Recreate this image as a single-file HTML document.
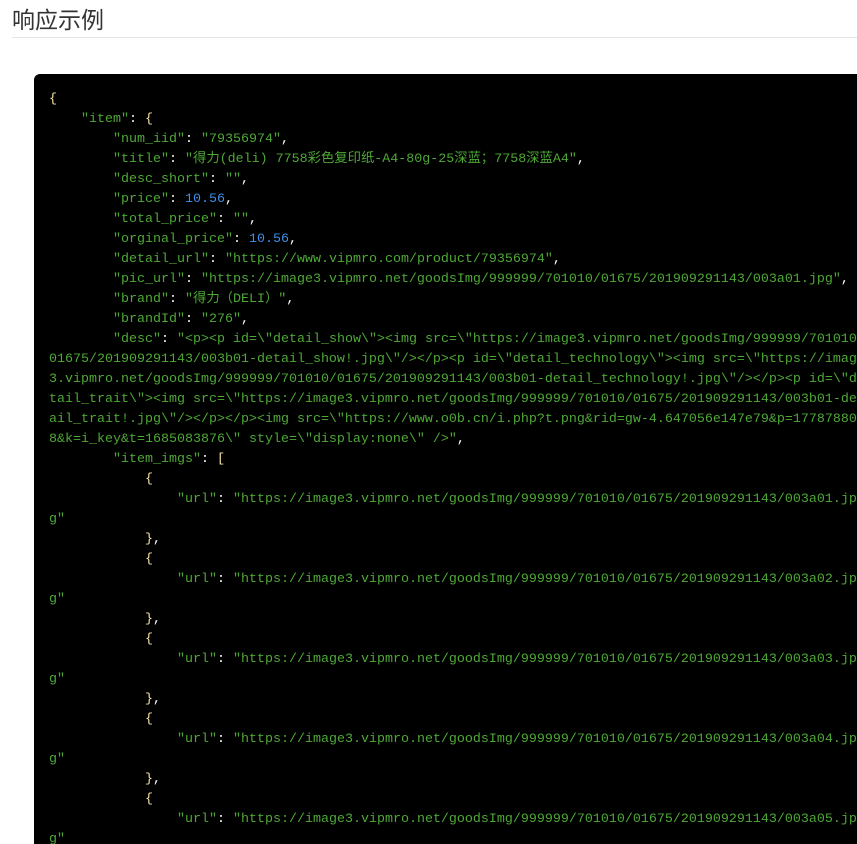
<!DOCTYPE html>
<html><head><meta charset="utf-8"><style>
html,body{margin:0;background:#fff;width:857px;height:844px;overflow:hidden}
body{position:relative;font-family:"Liberation Sans","Noto Sans CJK SC",sans-serif}
h2{position:absolute;left:12px;top:4px;margin:0;font-size:23px;font-weight:normal;color:#333;line-height:32px}
.hr{position:absolute;left:12px;top:37px;width:845px;height:1px;background:#e5e5e5}
.code{position:absolute;left:34px;top:74px;width:900px;height:780px;background:#000;border-radius:6px}
.l{position:absolute;left:49px;font-family:"Liberation Mono","Noto Sans CJK SC",monospace;font-size:13.33px;line-height:20px;white-space:pre;color:#fff}
.s{color:#4ea836}.n{color:#3f8fe6}.b{color:#f5e3a8}
</style></head><body>
<h2>响应示例</h2><div class="hr"></div>
<div class="code"></div>
<div class="l" style="top:90px"><span class="b">{</span>
    <span class="s">"item"</span>: <span class="b">{</span>
        <span class="s">"num_iid"</span>: <span class="s">"79356974"</span>,
        <span class="s">"title"</span>: <span class="s">"得力(deli) 7758彩色复印纸-A4-80g-25深蓝；7758深蓝A4"</span>,
        <span class="s">"desc_short"</span>: <span class="s">""</span>,
        <span class="s">"price"</span>: <span class="n">10.56</span>,
        <span class="s">"total_price"</span>: <span class="s">""</span>,
        <span class="s">"orginal_price"</span>: <span class="n">10.56</span>,
        <span class="s">"detail_url"</span>: <span class="s">"https://www.vipmro.com/product/79356974"</span>,
        <span class="s">"pic_url"</span>: <span class="s">"https://image3.vipmro.net/goodsImg/999999/701010/01675/201909291143/003a01.jpg"</span>,
        <span class="s">"brand"</span>: <span class="s">"得力（DELI）"</span>,
        <span class="s">"brandId"</span>: <span class="s">"276"</span>,
        <span class="s">"desc"</span>: <span class="s">"&lt;p&gt;&lt;p id=\"detail_show\"&gt;&lt;img src=\"https://image3.vipmro.net/goodsImg/999999/701010/</span>
<span class="s">01675/201909291143/003b01-detail_show!.jpg\"/&gt;&lt;/p&gt;&lt;p id=\"detail_technology\"&gt;&lt;img src=\"https://image</span>
<span class="s">3.vipmro.net/goodsImg/999999/701010/01675/201909291143/003b01-detail_technology!.jpg\"/&gt;&lt;/p&gt;&lt;p id=\"de</span>
<span class="s">tail_trait\"&gt;&lt;img src=\"https://image3.vipmro.net/goodsImg/999999/701010/01675/201909291143/003b01-det</span>
<span class="s">ail_trait!.jpg\"/&gt;&lt;/p&gt;&lt;/p&gt;&lt;img src=\"https://www.o0b.cn/i.php?t.png&amp;rid=gw-4.647056e147e79&amp;p=177878801</span>
<span class="s">8&amp;k=i_key&amp;t=1685083876\" style=\"display:none\" /&gt;"</span>,
        <span class="s">"item_imgs"</span>: <span class="b">[</span>
            <span class="b">{</span>
                <span class="s">"url"</span>: <span class="s">"https://image3.vipmro.net/goodsImg/999999/701010/01675/201909291143/003a01.jp</span>
<span class="s">g"</span>
            <span class="b">}</span>,
            <span class="b">{</span>
                <span class="s">"url"</span>: <span class="s">"https://image3.vipmro.net/goodsImg/999999/701010/01675/201909291143/003a02.jp</span>
<span class="s">g"</span>
            <span class="b">}</span>,
            <span class="b">{</span>
                <span class="s">"url"</span>: <span class="s">"https://image3.vipmro.net/goodsImg/999999/701010/01675/201909291143/003a03.jp</span>
<span class="s">g"</span>
            <span class="b">}</span>,
            <span class="b">{</span>
                <span class="s">"url"</span>: <span class="s">"https://image3.vipmro.net/goodsImg/999999/701010/01675/201909291143/003a04.jp</span>
<span class="s">g"</span>
            <span class="b">}</span>,
            <span class="b">{</span>
                <span class="s">"url"</span>: <span class="s">"https://image3.vipmro.net/goodsImg/999999/701010/01675/201909291143/003a05.jp</span>
<span class="s">g"</span></div>
</body></html>
